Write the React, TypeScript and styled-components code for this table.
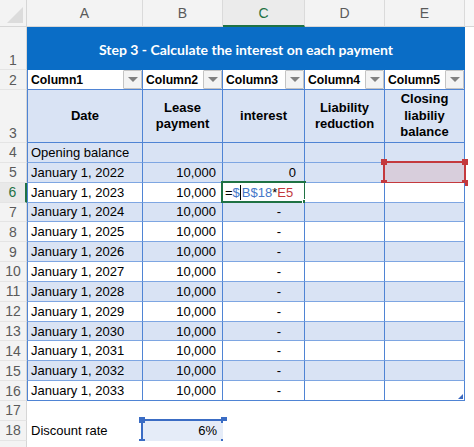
import React from 'react';
import styled, { createGlobalStyle, css } from 'styled-components';

const Global = createGlobalStyle`
  html, body { margin: 0; padding: 0; background: #ffffff; overflow: hidden; }
  body { font-family: "Liberation Sans", Arial, Helvetica, sans-serif; color: #000; }
`;

const BLUE_V = '#4f84d4';
const BLUE_H = '#7ea6e2';
const BAND = '#d9e3f4';
const GREEN = '#1f7244';

const Sheet = styled.div`
  display: grid;
  grid-template-columns: 27px 116px 80px 82px 80px 80px 1fr;
  grid-template-rows: 27px 43px 20px 53px repeat(13, 19.85px) 20px 20px 20px;
  width: 474px;
  height: 447px;
  overflow: hidden;
  font-size: 13px;
`;

const Corner = styled.div`
  position: relative;
  background: #f3f3f3;
  border-right: 1px solid #d6d6d6;
  border-bottom: 1px solid #d6d6d6;
  &::after {
    content: '';
    position: absolute;
    right: 3px;
    bottom: 3px;
    width: 0;
    height: 0;
    border-left: 16px solid transparent;
    border-bottom: 16px solid #dcdcdc;
  }
`;

const ColHead = styled.div<{ $active?: boolean }>`
  display: flex;
  align-items: center;
  justify-content: center;
  background: ${(p) => (p.$active ? '#ebebeb' : '#f3f3f3')};
  color: ${(p) => (p.$active ? GREEN : '#5a5a5a')};
  font-size: 14px;
  border-right: 1px solid #dadada;
  border-bottom: ${(p) => (p.$active ? `2px solid ${GREEN}` : '1px solid #d6d6d6')};
  padding-top: ${(p) => (p.$active ? '1px' : '0')};
`;

const RowHead = styled.div<{ $active?: boolean; $bottom?: boolean }>`
  display: flex;
  align-items: ${(p) => (p.$bottom ? 'flex-end' : 'center')};
  justify-content: center;
  padding-bottom: ${(p) => (p.$bottom ? '1px' : '0')};
  background: ${(p) => (p.$active ? '#e9e9e9' : '#f3f3f3')};
  color: ${(p) => (p.$active ? GREEN : '#5a5a5a')};
  font-size: 14px;
  border-right: ${(p) => (p.$active ? `2px solid ${GREEN}` : '1px solid #d6d6d6')};
  border-bottom: 1px solid #e4e4e4;
`;

const Title = styled.div`
  grid-column: 2 / 7;
  display: flex;
  align-items: center;
  justify-content: center;
  background: #0a6dc6;
  color: #ffffff;
  font-family: Lato, "Liberation Sans", sans-serif;
  font-weight: 700;
  font-size: 14px;
  padding-top: 1px;
`;

const Blank = styled.div<{ $head?: boolean }>`
  background: ${(p) => (p.$head ? '#f7f7f7' : '#ffffff')};
  border-bottom: ${(p) => (p.$head ? '1px solid #d6d6d6' : 'none')};
`;

const FilterCell = styled.div<{ $first?: boolean }>`
  display: flex;
  align-items: center;
  justify-content: space-between;
  background: #ffffff;
  font-weight: 700;
  font-size: 12.2px;
  padding-left: 3px;
  border-right: 1px solid ${BLUE_V};
  border-bottom: 1px solid ${BLUE_V};
  ${(p) => p.$first && css`border-left: 1px solid ${BLUE_V};`}
`;

const DropBtn = styled.span`
  display: flex;
  align-items: center;
  justify-content: center;
  width: 19px;
  height: 19px;
  box-sizing: border-box;
  background: #f3f3f3;
  border: 1px solid #c4c4c4;
  border-radius: 1px;
  &::after {
    content: '';
    width: 0;
    height: 0;
    border-left: 5px solid transparent;
    border-right: 5px solid transparent;
    border-top: 5px solid #808080;
  }
`;

const HeadCell = styled.div<{ $first?: boolean }>`
  display: flex;
  align-items: center;
  justify-content: center;
  text-align: center;
  background: ${BAND};
  font-weight: 700;
  font-size: 13px;
  line-height: 16.5px;
  border-right: 1px solid ${BLUE_V};
  border-bottom: 1px solid ${BLUE_V};
  ${(p) => p.$first && css`border-left: 1px solid ${BLUE_V};`}
`;

const DataCell = styled.div<{
  $band?: boolean;
  $align?: 'left' | 'right';
  $pad?: number;
  $first?: boolean;
  $last?: boolean;
  $fill?: string;
}>`
  position: relative;
  display: flex;
  align-items: center;
  justify-content: ${(p) => (p.$align === 'right' ? 'flex-end' : 'flex-start')};
  padding: ${(p) => (p.$align === 'right' ? `0 ${p.$pad ?? 6}px 0 0` : `0 0 0 ${p.$pad ?? 3}px`)};
  background: ${(p) => p.$fill ?? (p.$band ? BAND : '#ffffff')};
  white-space: nowrap;
  border-right: 1px solid ${BLUE_V};
  border-bottom: 1px solid ${(p) => (p.$last ? BLUE_V : BLUE_H)};
  ${(p) => p.$first && css`border-left: 1px solid ${BLUE_V};`}
`;

const PlainCell = styled.div<{ $align?: 'left' | 'right'; $fill?: string }>`
  position: relative;
  display: flex;
  align-items: center;
  justify-content: ${(p) => (p.$align === 'right' ? 'flex-end' : 'flex-start')};
  padding: ${(p) => (p.$align === 'right' ? '0 6px 0 0' : '0 0 0 4px')};
  background: ${(p) => p.$fill ?? '#ffffff'};
`;

const ActiveBox = styled.span`
  position: absolute;
  left: -2px;
  top: -2px;
  right: -2px;
  bottom: -1px;
  border: 2px solid ${GREEN};
  pointer-events: none;
  &::after {
    content: '';
    position: absolute;
    right: -5px;
    bottom: -5px;
    width: 5px;
    height: 5px;
    background: ${GREEN};
    border: 1px solid #fff;
  }
`;

const RefBox = styled.span<{ $color: string }>`
  position: absolute;
  left: -2px;
  top: -2px;
  right: -2px;
  bottom: -2px;
  border: 2px solid ${(p) => p.$color};
  pointer-events: none;
`;

const Handle = styled.i<{ $color: string; $x: 'l' | 'r'; $y: 't' | 'b' }>`
  position: absolute;
  width: 6px;
  height: 6px;
  background: ${(p) => p.$color};
  ${(p) => (p.$x === 'l' ? 'left: -4px;' : 'right: -4px;')}
  ${(p) => (p.$y === 't' ? 'top: -4px;' : 'bottom: -4px;')}
`;

const ResizeMark = styled.span`
  position: absolute;
  right: 1px;
  bottom: 1px;
  width: 0;
  height: 0;
  border-left: 5px solid transparent;
  border-bottom: 5px solid #3b69c0;
`;

const Formula = styled.span`
  display: inline-flex;
  align-items: center;
`;

const Tok = styled.span<{ $c: string }>`
  color: ${(p) => p.$c};
`;

const Caret = styled.span`
  display: inline-block;
  width: 1px;
  height: 15px;
  background: #000;
  margin: 0 0.5px;
`;

function RefFrame({ color }: { color: string }) {
  return (
    <RefBox $color={color}>
      <Handle $color={color} $x="l" $y="t" />
      <Handle $color={color} $x="r" $y="t" />
      <Handle $color={color} $x="l" $y="b" />
      <Handle $color={color} $x="r" $y="b" />
    </RefBox>
  );
}

const years = Array.from({ length: 12 }, (_, i) => 2022 + i);

export default function App() {
  return (
    <>
      <Global />
      <Sheet>
        <Corner />
        <ColHead>A</ColHead>
        <ColHead>B</ColHead>
        <ColHead $active>C</ColHead>
        <ColHead>D</ColHead>
        <ColHead>E</ColHead>
        <Blank $head />

        <RowHead $bottom>1</RowHead>
        <Title>Step 3 - Calculate the interest on each payment</Title>
        <Blank />

        <RowHead>2</RowHead>
        {[1, 2, 3, 4, 5].map((n) => (
          <FilterCell key={n} $first={n === 1}>
            <span>Column{n}</span>
            <DropBtn />
          </FilterCell>
        ))}
        <Blank />

        <RowHead $bottom>3</RowHead>
        <HeadCell $first>Date</HeadCell>
        <HeadCell>
          Lease
          <br />
          payment
        </HeadCell>
        <HeadCell>interest</HeadCell>
        <HeadCell>
          Liability
          <br />
          reduction
        </HeadCell>
        <HeadCell>
          Closing
          <br />
          liabiliy
          <br />
          balance
        </HeadCell>
        <Blank />

        <RowHead>4</RowHead>
        <DataCell $band $first>Opening balance</DataCell>
        <DataCell $band />
        <DataCell $band />
        <DataCell $band />
        <DataCell $band />
        <Blank />

        {years.map((y, i) => {
          const row = 5 + i;
          const band = row % 2 === 1;
          const last = row === 16;
          return (
            <React.Fragment key={y}>
              <RowHead $active={row === 6}>{row}</RowHead>
              <DataCell $band={band} $first $last={last}>
                January 1, {y}
              </DataCell>
              <DataCell $band={band} $align="right" $last={last}>
                10,000
              </DataCell>
              {row === 5 ? (
                <DataCell $band={band} $align="right" $pad={8}>
                  0
                </DataCell>
              ) : row === 6 ? (
                <DataCell $band={band} $pad={2}>
                  <Formula>
                    <Tok $c="#000">=</Tok>
                    <Tok $c="#4677c8">$</Tok>
                    <Caret />
                    <Tok $c="#4677c8">B$18</Tok>
                    <Tok $c="#000">*</Tok>
                    <Tok $c="#c2383c">E5</Tok>
                  </Formula>
                  <ActiveBox />
                </DataCell>
              ) : (
                <DataCell $band={band} $align="right" $pad={23} $last={last}>
                  -
                </DataCell>
              )}
              <DataCell $band={band} $last={last} />
              <DataCell $band={band} $last={last} $fill={row === 5 ? '#d8cedc' : undefined}>
                {row === 5 && <RefFrame color="#c4393d" />}
                {last && <ResizeMark />}
              </DataCell>
              <Blank />
            </React.Fragment>
          );
        })}

        <RowHead>17</RowHead>
        <PlainCell />
        <PlainCell />
        <PlainCell />
        <PlainCell />
        <PlainCell />
        <Blank />

        <RowHead>18</RowHead>
        <PlainCell>Discount rate</PlainCell>
        <PlainCell $align="right" $fill="#e5ecf8">
          6%
          <RefFrame color="#3a6cc4" />
        </PlainCell>
        <PlainCell />
        <PlainCell />
        <PlainCell />
        <Blank />

        <RowHead />
        <PlainCell />
        <PlainCell />
        <PlainCell />
        <PlainCell />
        <PlainCell />
        <Blank />
      </Sheet>
    </>
  );
}
